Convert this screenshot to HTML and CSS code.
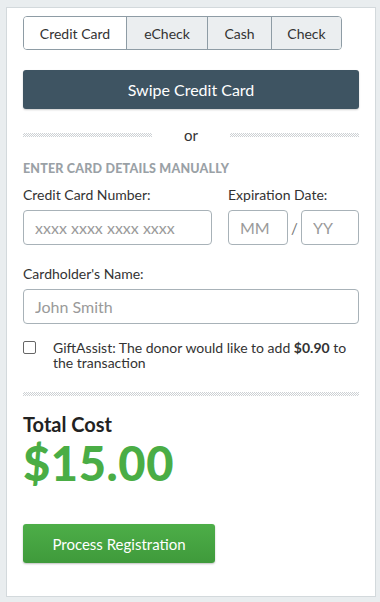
FILE: index.html
```html
<!DOCTYPE html>
<html lang="en">

<head>
    <meta charset="UTF-8">
    <meta name="viewport" content="width=device-width, initial-scale=1.0">
    <title>Payment</title>
    <link rel="stylesheet" href="styles.css">
</head>

<body>
    <div class="card">
        <div class="tabs">
            <div class="tab active">Credit Card</div>
            <div class="tab tab-echeck">eCheck</div>
            <div class="tab tab-cash">Cash</div>
            <div class="tab tab-check">Check</div>
        </div>

        <button class="swipe-btn">Swipe Credit Card</button>

        <div class="or-row">
            <span class="dots"></span>
            <span class="or">or</span>
            <span class="dots"></span>
        </div>

        <h3 class="manual">ENTER CARD DETAILS MANUALLY</h3>

        <div class="row">
            <div class="field number">
                <label>Credit Card Number:</label>
                <input type="text" placeholder="xxxx xxxx xxxx xxxx">
            </div>
            <div class="field expiry">
                <label>Expiration Date:</label>
                <div class="exp-inputs">
                    <input type="text" class="mm" placeholder="MM">
                    <span class="slash">/</span>
                    <input type="text" class="yy" placeholder="YY">
                </div>
            </div>
        </div>

        <div class="field name">
            <label>Cardholder's Name:</label>
            <input type="text" placeholder="John Smith">
        </div>

        <div class="gift">
            <span class="box"></span>
            <p>GiftAssist: The donor would like to add <b>$0.90</b> to the transaction</p>
        </div>

        <div class="dots full"></div>

        <h2 class="total-label">Total Cost</h2>
        <div class="total">$15.00</div>

        <button class="process-btn">Process Registration</button>
    </div>
</body>

</html>
```

FILE: styles.css
```css
body {
    font-family: 'Lato', 'Open Sans', sans-serif;
    background-color: #e9edef;
    color: #333;
    margin: 0;
}

.card {
    width: 336px;
    margin: 7px 0 0 6px;
    background-color: #fff;
    border: 1px solid #d3d9dc;
    padding: 8px 16px 33px 16px;
}

.tabs {
    display: flex;
    width: 319px;
    height: 34px;
    box-sizing: border-box;
    border: 1px solid #8e9ca5;
    border-radius: 4px;
    overflow: hidden;
}

.tab {
    display: flex;
    align-items: center;
    justify-content: center;
    font-size: 14px;
    color: #333;
    background-color: #ebeef0;
    border-left: 1px solid #8e9ca5;
}

.tab.active {
    width: 102px;
    background-color: #fff;
    border-left: none;
}

.tab-echeck {
    width: 80px;
}

.tab-cash {
    width: 63px;
}

.tab-check {
    flex: 1;
}

.swipe-btn {
    display: block;
    width: 100%;
    height: 39px;
    margin-top: 20px;
    background-color: #3e5462;
    color: #fff;
    border: none;
    border-radius: 3px;
    font-family: inherit;
    font-size: 16px;
    box-shadow: 0 1px 2px rgba(0, 0, 0, 0.2);
}

.or-row {
    display: flex;
    align-items: center;
    margin-top: 15px;
    height: 22px;
}

.or {
    width: 78px;
    text-align: center;
    font-size: 15px;
    color: #333;
}

.dots {
    flex: 1;
    height: 4px;
    background-image: repeating-conic-gradient(#cdd1d4 0 25%, transparent 0 50%);
    background-size: 2px 2px;
}

.dots.full {
    display: block;
    margin-top: 22px;
}

.manual {
    margin: 15px 0 0 0;
    font-size: 12.5px;
    font-weight: 900;
    color: #9aa1a6;
    letter-spacing: 0.2px;
}

.row {
    display: flex;
    gap: 16px;
    margin-top: 10px;
}

.field label {
    display: block;
    font-size: 14px;
    color: #333;
    margin-bottom: 7px;
}

input {
    height: 35px;
    box-sizing: border-box;
    border: 1px solid #a8b2b8;
    border-radius: 4px;
    padding: 0 11px;
    font-family: inherit;
    font-size: 16px;
    color: #333;
}

input::placeholder {
    color: #9a9a9a;
}

.number input {
    width: 189px;
}

.exp-inputs {
    display: flex;
    align-items: center;
}

.mm {
    width: 60px;
}

.yy {
    width: 58px;
}

.slash {
    width: 13px;
    text-align: center;
    font-size: 15px;
    color: #777;
}

.name {
    margin-top: 20px;
}

.name input {
    width: 100%;
}

.gift {
    display: flex;
    margin-top: 16px;
}

.box {
    width: 11px;
    height: 11px;
    flex-shrink: 0;
    border: 1px solid #666;
    border-radius: 2px;
    margin: 1px 17px 0 0;
}

.gift p {
    margin: 0;
    font-size: 14px;
    line-height: 15px;
    color: #333;
}

.total-label {
    margin: 16px 0 0 0;
    font-size: 20px;
    font-weight: 700;
    color: #222;
}

.total {
    font-size: 47px;
    font-weight: 900;
    color: #4aad45;
    line-height: 48px;
    letter-spacing: 0.6px;
    margin-top: 3px;
}

.process-btn {
    display: block;
    width: 192px;
    height: 39px;
    margin-top: 37px;
    background: linear-gradient(#4dae48, #3f9a3b);
    color: #fff;
    border: none;
    border-radius: 3px;
    font-family: inherit;
    font-size: 15px;
    box-shadow: 0 1px 2px rgba(0, 0, 0, 0.25);
}
```
